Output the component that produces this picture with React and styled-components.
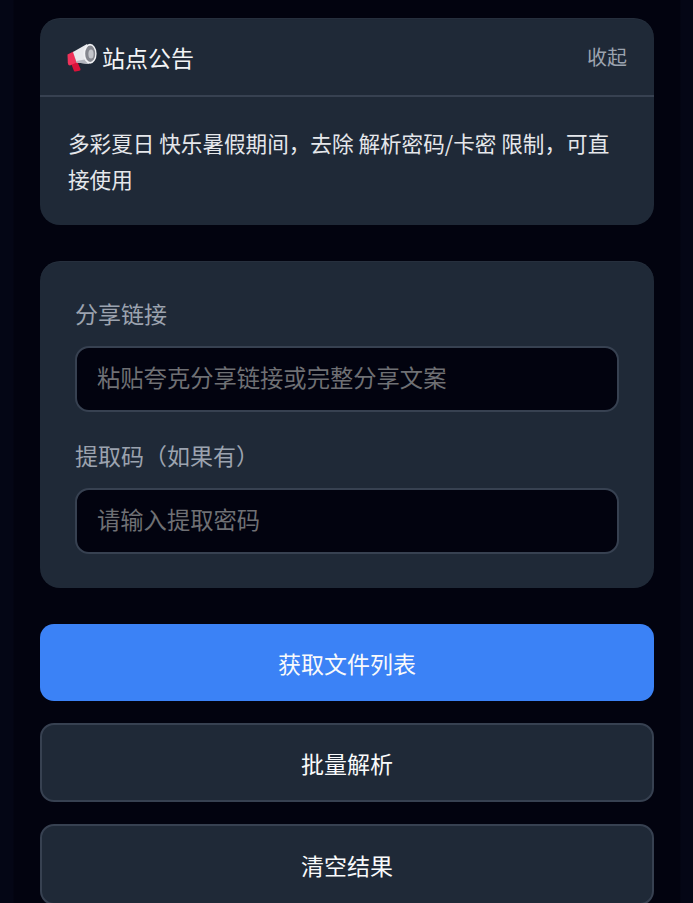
import React from 'react'
import styled, { createGlobalStyle } from 'styled-components'

const GlobalStyle = createGlobalStyle`
  html, body {
    margin: 0;
    height: 100%;
    background: #02030f;
  }
  body {
    font-family: "Noto Sans CJK SC", "Noto Sans", sans-serif;
    overflow: hidden;
  }
  * {
    box-sizing: border-box;
  }
`

const Page = styled.div`
  display: flex;
  flex-direction: column;
  height: 903px;
  padding: 18px 39px 0 40px;
  overflow: hidden;
  background: linear-gradient(90deg, #040615 0, #040615 13px, #02030f 14px, #02030f 680px, #040615 681px);
`

const Card = styled.section`
  flex: none;
  background: #1f2937;
  border-radius: 20px;
  box-shadow: inset 0 1px 0 rgba(255, 255, 255, 0.03);
`

const NoticeHeader = styled.div`
  display: flex;
  align-items: center;
  justify-content: space-between;
  height: 79px;
  padding: 0 27px;
  border-bottom: 2px solid #374151;
`

const NoticeTitle = styled.h2`
  display: flex;
  align-items: center;
  gap: 4px;
  margin: 0;
  font-size: 23px;
  font-weight: 400;
  color: #f3f4f6;
`

const Collapse = styled.button`
  padding: 0;
  border: none;
  background: none;
  font: inherit;
  font-size: 20px;
  color: #9ca3af;
`

const NoticeBody = styled.p`
  margin: 0;
  padding: 28px;
  font-size: 21.6px;
  line-height: 36px;
  color: #e5e7eb;
`

const FormCard = styled(Card)`
  margin-top: 36px;
  padding: 34px 35px;
`

const Field = styled.div`
  & + & {
    margin-top: 25px;
  }
`

const Label = styled.label`
  display: block;
  margin-bottom: 15px;
  font-size: 23px;
  line-height: 36px;
  color: #9ca3af;
`

const Input = styled.input`
  display: block;
  width: 100%;
  height: 66px;
  padding: 0 20px 5px;
  border: 2px solid #374151;
  border-radius: 14px;
  outline: none;
  background: #02030f;
  font: inherit;
  font-size: 23.3px;
  color: #f9fafb;

  &::placeholder {
    color: #6f7074;
    opacity: 1;
  }
`

const Button = styled.button`
  display: block;
  flex: none;
  width: 100%;
  height: ${p => (p.$primary ? '77px' : '79px')};
  margin-top: ${p => (p.$primary ? '36px' : '22px')};
  padding: 0;
  border: ${p => (p.$primary ? 'none' : '2px solid #374151')};
  border-radius: 14px;
  background: ${p => (p.$primary ? '#3b82f6' : '#1f2937')};
  font: inherit;
  font-size: 23px;
  color: #f9fafb;

  &:last-child {
    height: 81px;
  }
`

const Megaphone = () => (
  <svg width="31" height="30" viewBox="0 0 31 30" aria-hidden="true">
    <path d="M3.5 20 L10 19 L13.5 27 Q13.8 28.4 12.4 28.8 L8.5 29.6 Q7.2 29.7 6.8 28.4 Z" fill="#d9123a" />
    <path d="M0.5 12.5 L6.5 9.5 L9.5 20.5 L3 23.5 Q1 23.5 0.8 21 Z" fill="#f0325a" />
    <path d="M6 10 L20 2 L22 22 L9.5 20.5 Z" fill="#e8e9ed" />
    <path d="M9 19 L21 17 L22 22 L9.5 20.5 Z" fill="#b4b6be" />
    <ellipse cx="23" cy="11.8" rx="6.6" ry="10" fill="#f1f2f5" />
    <ellipse cx="23.2" cy="11.8" rx="5" ry="8.2" fill="#85878f" />
    <ellipse cx="24" cy="12" rx="2.6" ry="4.6" fill="#c4c6cc" />
  </svg>
)

const App = () => (
  <>
    <GlobalStyle />
    <Page>
      <Card>
        <NoticeHeader>
          <NoticeTitle>
            <Megaphone />
            站点公告
          </NoticeTitle>
          <Collapse>收起</Collapse>
        </NoticeHeader>
        <NoticeBody>
          多彩夏日 快乐暑假期间&#xFF0C;去除 解析密码/卡密 限制&#xFF0C;可直接使用
        </NoticeBody>
      </Card>
      <FormCard>
        <Field>
          <Label htmlFor="share-link">分享链接</Label>
          <Input id="share-link" placeholder="粘贴夸克分享链接或完整分享文案" />
        </Field>
        <Field>
          <Label htmlFor="share-code">提取码&#xFF08;如果有&#xFF09;</Label>
          <Input id="share-code" placeholder="请输入提取密码" />
        </Field>
      </FormCard>
      <Button $primary>获取文件列表</Button>
      <Button>批量解析</Button>
      <Button>清空结果</Button>
    </Page>
  </>
)

export default App
